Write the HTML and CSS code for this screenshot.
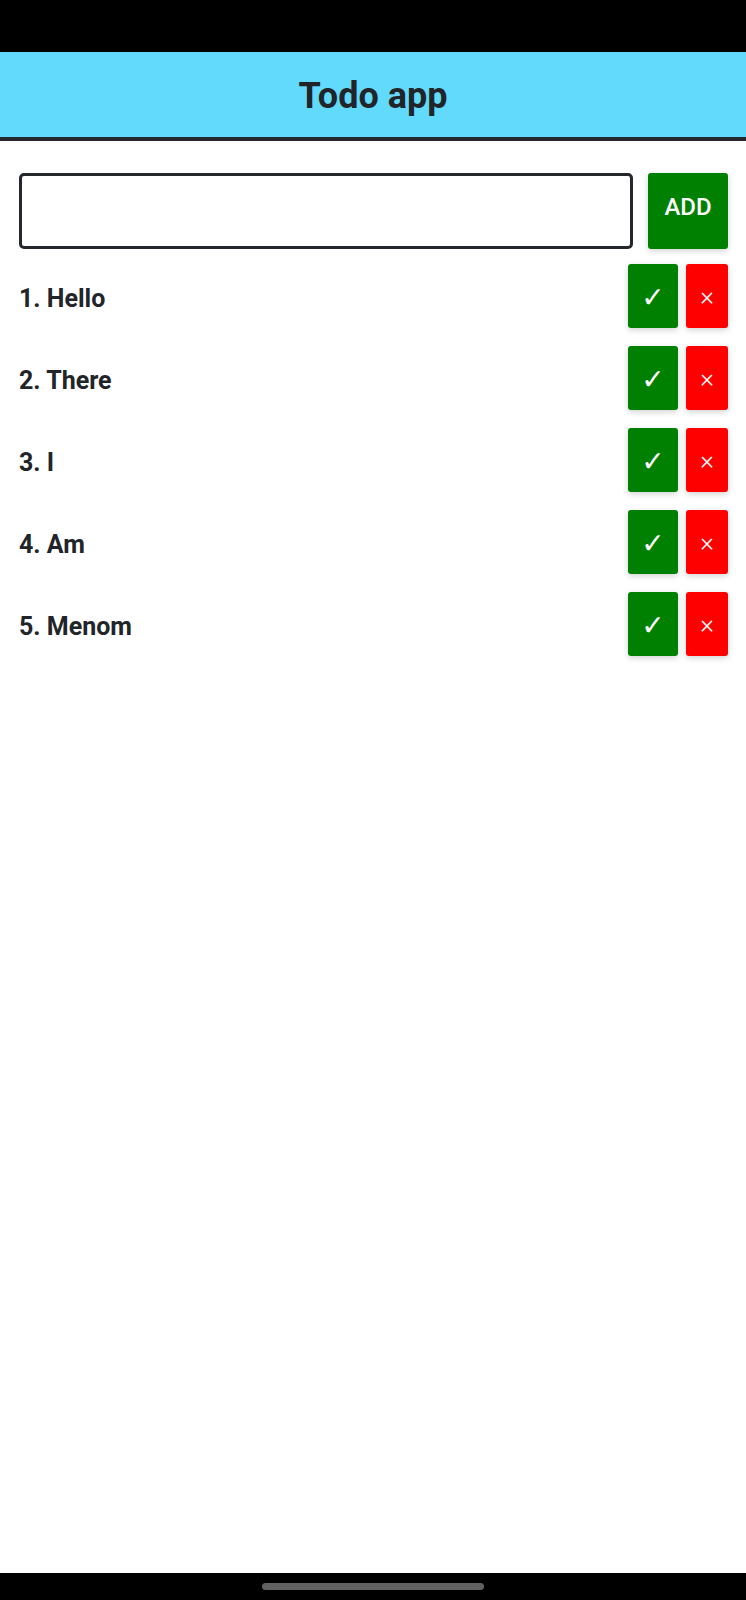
FILE: index.html
```html
<!DOCTYPE html>
<html lang="en">
<head>
<meta charset="utf-8">
<title>Todo app</title>
<link rel="stylesheet" href="styles.css">
</head>
<body>
<div class="screen">
  <div class="status-bar"></div>
  <header class="app-header">
    <h1 class="app-title">Todo app</h1>
  </header>
  <main class="content">
    <form class="add-form">
      <input class="todo-input" type="text" aria-label="New todo">
      <button class="btn btn-add" type="button">ADD</button>
    </form>
    <ul class="todo-list">
      <li class="todo-item"><span class="todo-text">1. Hello</span><div class="actions"><button class="btn btn-done" type="button">&#10003;</button><button class="btn btn-delete" type="button">&#215;</button></div></li>
      <li class="todo-item"><span class="todo-text">2. There</span><div class="actions"><button class="btn btn-done" type="button">&#10003;</button><button class="btn btn-delete" type="button">&#215;</button></div></li>
      <li class="todo-item"><span class="todo-text">3. I</span><div class="actions"><button class="btn btn-done" type="button">&#10003;</button><button class="btn btn-delete" type="button">&#215;</button></div></li>
      <li class="todo-item"><span class="todo-text">4. Am</span><div class="actions"><button class="btn btn-done" type="button">&#10003;</button><button class="btn btn-delete" type="button">&#215;</button></div></li>
      <li class="todo-item"><span class="todo-text">5. Menom</span><div class="actions"><button class="btn btn-done" type="button">&#10003;</button><button class="btn btn-delete" type="button">&#215;</button></div></li>
    </ul>
  </main>
  <div class="nav-bar"><div class="nav-handle"></div></div>
</div>
</body>
</html>
```
FILE: styles.css
```css
* { box-sizing: border-box; }
html, body { margin: 0; padding: 0; }
body {
  font-family: Roboto, "Liberation Sans", sans-serif;
  color: #212529;
  background: #fff;
}
.screen {
  width: 746px;
  min-height: 1600px;
  display: flex;
  flex-direction: column;
}
.status-bar {
  height: 52px;
  background: #000;
}
.app-header {
  height: 89px;
  background: #61dafb;
  border-bottom: 4px solid #24272b;
  display: flex;
  align-items: center;
  justify-content: center;
}
.app-title {
  margin: 0;
  font-size: 36px;
  font-weight: 700;
  color: #212529;
  line-height: 1;
  padding-top: 3px;
}
.content {
  flex: 1;
  padding: 32px 18px 0 19px;
}
.add-form {
  display: flex;
  gap: 15px;
  margin: 0;
}
.todo-input {
  flex: 1;
  height: 76px;
  border: 3px solid #24272b;
  border-radius: 5px;
  background: #fff;
  font-size: 22px;
  outline: none;
}
.btn {
  border: none;
  color: #fff;
  font-family: Roboto, "Liberation Sans", sans-serif;
  border-radius: 3px;
  box-shadow: 0 2px 6px rgba(0, 0, 0, 0.18);
  padding: 0;
  display: flex;
  align-items: center;
  justify-content: center;
}
.btn-add {
  width: 80px;
  height: 76px;
  background: #008000;
  font-size: 24px;
  font-weight: 500;
  padding-bottom: 8px;
}
.todo-list {
  list-style: none;
  margin: 15px 0 0;
  padding: 0;
  display: flex;
  flex-direction: column;
  gap: 18px;
}
.todo-item {
  display: flex;
  align-items: center;
  justify-content: space-between;
  height: 64px;
}
.todo-text {
  font-size: 25px;
  font-weight: 700;
  padding-top: 4px;
}
.actions {
  display: flex;
  gap: 8px;
  height: 64px;
}
.btn-done {
  width: 50px;
  height: 64px;
  background: #008000;
  font-family: "DejaVu Sans", sans-serif;
  font-size: 28px;
  font-weight: 700;
  padding-top: 2px;
}
.btn-delete {
  width: 42px;
  height: 64px;
  background: #ff0000;
  font-size: 26px;
  font-weight: 300;
}
.nav-bar {
  height: 27px;
  background: #000;
  display: flex;
  justify-content: center;
  padding-top: 10px;
}
.nav-handle {
  width: 222px;
  height: 7px;
  border-radius: 4px;
  background: #616161;
}
```
